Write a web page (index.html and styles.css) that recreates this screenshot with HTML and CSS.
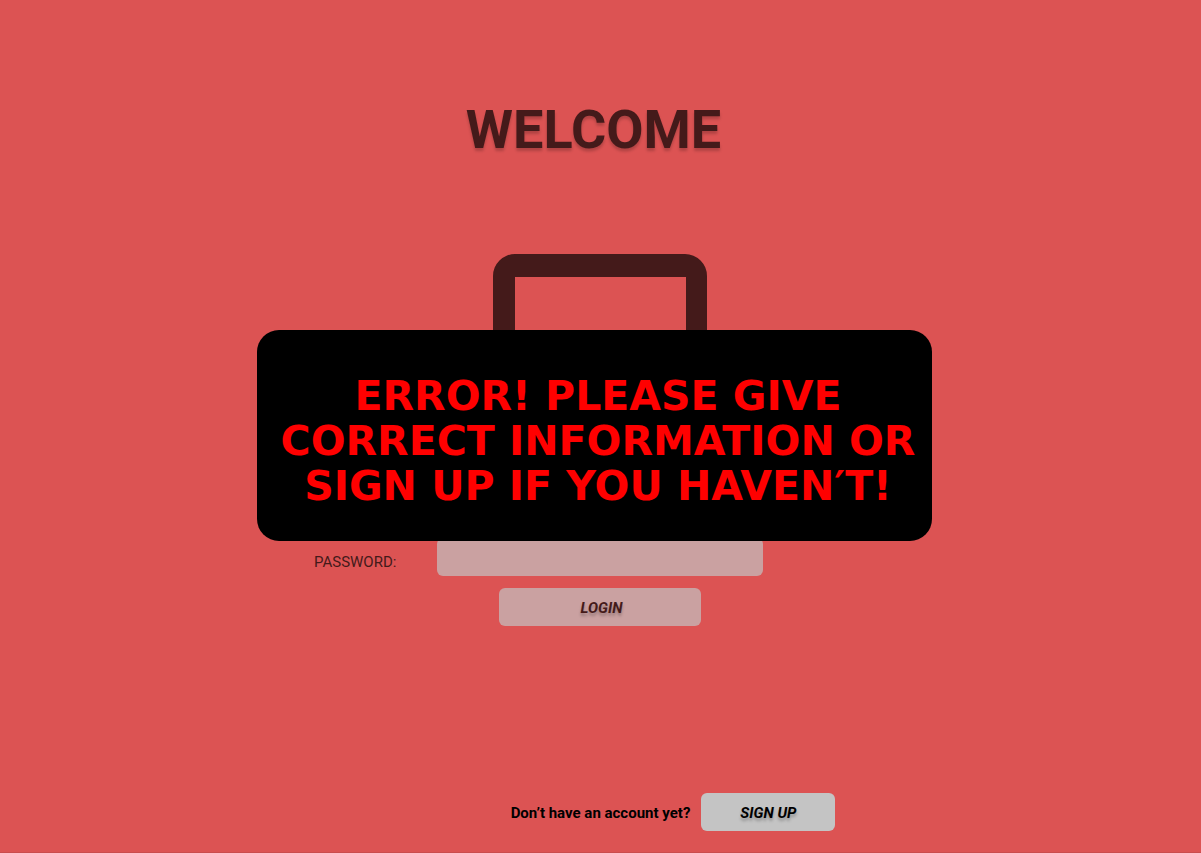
FILE: index.html
```html
<!DOCTYPE html>
<html lang="en">
<head>
<meta charset="utf-8">
<meta name="viewport" content="width=device-width, initial-scale=1">
<title>Welcome</title>
<link rel="stylesheet" href="styles.css">
</head>
<body>
<main class="page">
  <h1 class="title">WELCOME</h1>
  <svg class="lock" viewBox="0 0 214 160" aria-hidden="true">
    <path fill="currentColor" fill-rule="evenodd" d="M0 160V22A22 22 0 0 1 22 0H192A22 22 0 0 1 214 22V160H193V23H22V160Z"/>
  </svg>
  <form class="form">
    <label class="label" for="password">PASSWORD:</label>
    <input class="field" id="password" type="password">
    <button class="button login" type="submit">LOGIN</button>
  </form>
  <footer class="signup">
    <span class="question">Don’t have an account yet?</span>
    <button class="button signup-button" type="button">SIGN UP</button>
  </footer>
  <div class="alert" role="alertdialog" aria-labelledby="message">
    <p class="message" id="message">ERROR! PLEASE GIVE<br>CORRECT INFORMATION OR<br>SIGN UP IF YOU HAVEN′T!</p>
  </div>
</main>
</body>
</html>
```
FILE: styles.css
```css
* {
  box-sizing: border-box;
}

body {
  margin: 0;
  background: #dc5353;
  color: #441a1a;
  font: 15px/20px Roboto, sans-serif;
}

.page {
  position: relative;
  display: flex;
  flex-direction: column;
  align-items: center;
  min-height: 100vh;
  padding: 98px 1px 21px 0;
  border-bottom: 1px solid #c94d4d;
}

.title {
  margin: 0;
  padding-right: 13px;
  font-size: 54px;
  font-weight: 700;
  line-height: 64px;
  text-shadow: 0 3px 3px rgba(0, 0, 0, 0.2);
}

.lock {
  width: 214px;
  height: 160px;
  margin-top: 92px;
}

.form {
  display: grid;
  grid-template-columns: 124px 326px 124px;
  row-gap: 12px;
  align-items: center;
  margin-top: 124px;
}

.label {
  padding: 10px 0 0 1px;
}

.field {
  width: 100%;
  height: 38px;
  padding: 0 12px;
  border: 0;
  border-radius: 6px;
  background: #caa1a1;
  color: inherit;
  font: inherit;
}

.button {
  height: 38px;
  padding: 2px 0 0;
  border: 0;
  border-radius: 6px;
  font: italic 700 15px/20px Roboto, sans-serif;
  text-shadow: 0 3px 3px rgba(0, 0, 0, 0.25);
}

.login {
  grid-column: 2;
  justify-self: center;
  width: 202px;
  padding-left: 3px;
  background: #caa1a1;
  color: #441a1a;
}

.signup {
  display: flex;
  align-items: center;
  gap: 11px;
  margin-top: auto;
  padding-left: 146px;
  color: #000;
}

.question {
  padding-top: 2px;
  font-weight: 700;
}

.signup-button {
  width: 134px;
  background: #c4c4c4;
  color: #000;
}

.alert {
  position: absolute;
  top: 330px;
  left: 50%;
  width: 675px;
  padding: 44px 0 32px 8px;
  border-radius: 22px;
  background: #000;
  transform: translateX(-344px);
}

.message {
  margin: 0;
  color: #f00;
  font: 700 41px/45px "DejaVu Sans", sans-serif;
  text-align: center;
  white-space: nowrap;
}
```
